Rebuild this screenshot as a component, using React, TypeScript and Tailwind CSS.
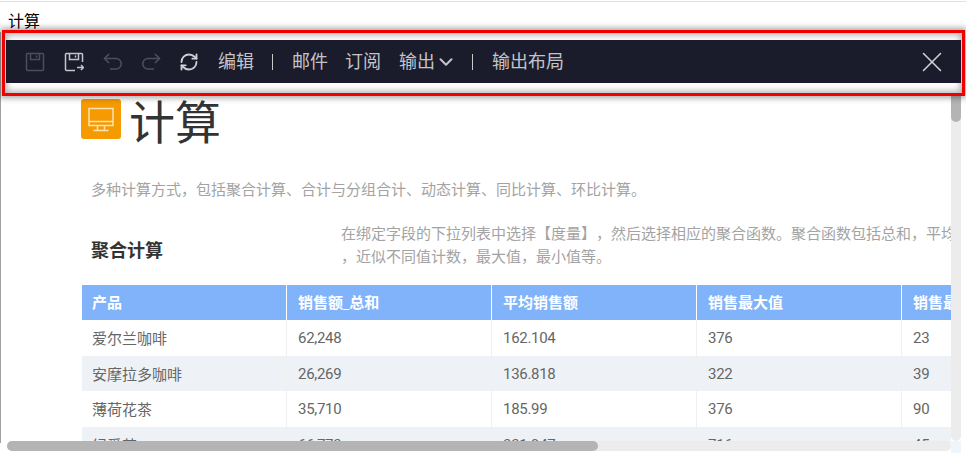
import { RefreshCw, ChevronDown, X } from 'lucide-react';

const columns = ['产品', '销售额_总和', '平均销售额', '销售最大值', '销售最小值'];

const rows = [
  ['爱尔兰咖啡', '62,248', '162.104', '376', '23'],
  ['安摩拉多咖啡', '26,269', '136.818', '322', '39'],
  ['薄荷花茶', '35,710', '185.99', '376', '90'],
  ['绿爱茶', '66,773', '331.947', '716', '45'],
];

function SaveIcon() {
  return (
    <svg width="20" height="20" viewBox="0 0 20 20" fill="none" stroke="currentColor" strokeWidth="1.5">
      <path d="M1.5 2.5a1 1 0 0 1 1-1h15a1 1 0 0 1 1 1v15a1 1 0 0 1-1 1h-15a1 1 0 0 1-1-1z" />
      <path d="M5.5 1.5v6h9v-6" />
      <path d="M11.5 3.5v2" />
    </svg>
  );
}

function SaveAsIcon() {
  return (
    <svg width="20" height="20" viewBox="0 0 20 20" fill="none" stroke="currentColor" strokeWidth="1.5">
      <path d="M18.5 10V2.5a1 1 0 0 0-1-1h-15a1 1 0 0 0-1 1v15a1 1 0 0 0 1 1H11" />
      <path d="M5.5 1.5v6h9v-6" />
      <path d="M11.5 3.5v2" />
      <path d="M13 15.5h6.5M17 13l2.5 2.5L17 18" />
    </svg>
  );
}

function UndoIcon() {
  return (
    <svg width="20" height="18" viewBox="0 0 20 18" fill="none" stroke="currentColor" strokeWidth="1.6">
      <path d="M6 1 1.5 5.5 6 10" />
      <path d="M1.5 5.5H13a5.25 5.25 0 0 1 0 10.5H7" />
    </svg>
  );
}

function RedoIcon() {
  return (
    <svg width="20" height="18" viewBox="0 0 20 18" fill="none" stroke="currentColor" strokeWidth="1.6">
      <path d="M14 1l4.500 4.500L14 10" />
      <path d="M18.500 5.500H7a5.250 5.250 0 0 0 0 10.500h6" />
    </svg>
  );
}

function MonitorIcon() {
  return (
    <svg width="30" height="30" viewBox="0 0 30 30" fill="none" stroke="#fde3b4" strokeWidth="1.5">
      <rect x="3" y="4.500" width="24" height="17" />
      <path d="M3 17.500h24M11.500 21.500v5M18.500 21.500v5M7.500 26.500h15" />
    </svg>
  );
}

function Separator() {
  return <div className="w-px h-[16px] bg-[#c8c8c8]" />;
}

function Toolbar() {
  return (
    <div className="absolute left-[2px] top-[28px] w-[963px] h-[66px] border-[3px] border-[#f00000] bg-white pt-[7px] pl-px pr-[1px] shadow-[0_0_6px_2px_rgba(0,0,0,0.35),inset_0_0_6px_2px_rgba(0,0,0,0.3)]">
      <div className="h-[43px] bg-[#1a1c2c] flex items-center pl-[19px] pr-[12px] text-[18px] text-[#c4c4c8]">
        <div className="text-[#4c4e5a]"><SaveIcon /></div>
        <div className="ml-[19px] text-[#c4c4c8]"><SaveAsIcon /></div>
        <div className="ml-[19px] text-[#4c4e5a]"><UndoIcon /></div>
        <div className="ml-[18px] text-[#4c4e5a]"><RedoIcon /></div>
        <RefreshCw className="ml-[18px] text-[#d0d0d4]" size={20} strokeWidth={2.2} />
        <span className="ml-[19px]">编辑</span>
        <div className="ml-[18px]"><Separator /></div>
        <span className="ml-[19px]">邮件</span>
        <span className="ml-[17px]">订阅</span>
        <span className="ml-[18px]">输出</span>
        <ChevronDown size={22} strokeWidth={2.2} />
        <div className="ml-[15px]"><Separator /></div>
        <span className="ml-[19px]">输出布局</span>
        <X className="ml-auto text-[#d0d0d4]" size={34} strokeWidth={1.1} />
      </div>
    </div>
  );
}

function DataTable() {
  return (
    <table className="mt-[17px] ml-px table-fixed border-separate border-spacing-0 w-[1025px] text-[15px]">
      <thead>
        <tr className="h-[35px] bg-[#80b3fa] text-white">
          {columns.map((col, j) => (
            <th key={col} className={j === 0 ? 'w-[205px] pl-[10px] text-left font-bold border-r border-white' : 'w-[205px] pl-[11px] text-left font-bold border-r border-white'}>{col}</th>
          ))}
        </tr>
      </thead>
      <tbody className="text-[#666666]">
        {rows.map((row, i) => (
          <tr key={row[0]} className={i % 2 === 0 ? 'h-[36px] bg-white' : 'h-[35px] bg-[#eef2f6]'}>
            {row.map((cell, j) => (
              <td key={j} className={j === 0 ? 'pl-[10px] pt-px border-r border-[#f0f0f0]' : "pl-[11px] pt-px font-['Roboto'] tracking-[-0.3px] border-r border-[#f0f0f0]"}>{cell}</td>
            ))}
          </tr>
        ))}
      </tbody>
    </table>
  );
}

export default function App() {
  return (
    <div
      className="relative h-[452px] w-[966px] overflow-hidden bg-white border-t border-[#e0e0e0] mt-px [text-spacing-trim:space-all]"
      style={{ fontFamily: '"Open Sans", "Noto Sans CJK SC", sans-serif' }}
    >
      <div className="pl-[8px] h-[30px] pt-[7px] text-[16px] leading-[24px] text-black">计算</div>

      <div className="h-[411px] w-[951px] overflow-hidden border-l border-[#a0a0a0] pl-[80px]">
        <div className="w-[1100px] pt-[67px]">
          <div className="flex items-center h-[40px]">
            <div className="w-[40px] h-[40px] rounded-[3px] bg-[#f59a00] flex items-center justify-center">
              <MonitorIcon />
            </div>
            <h1 className="ml-[8px] mt-[3px] text-[46px] leading-[48px] text-[#333333]">计算</h1>
          </div>
          <p className="mt-[39px] ml-[10px] text-[15px] leading-[22px] text-[#a3a3a3]">
            多种计算方式，包括聚合计算、合计与分组合计、动态计算、同比计算、环比计算。
          </p>
          <div className="mt-[22px] ml-[10px] flex items-start">
            <h2 className="w-[250px] mt-[14px] text-[18px] leading-[28px] font-bold text-[#333333]">聚合计算</h2>
            <div className="text-[15px] leading-[23px] text-[#a3a3a3] whitespace-nowrap">
              <div>在绑定字段的下拉列表中选择【度量】，然后选择相应的聚合函数。聚合函数包括总和，平均值</div>
              <div>，近似不同值计数，最大值，最小值等。</div>
            </div>
          </div>
          <DataTable />
        </div>
      </div>

      {/* scrollbars */}
      <div className="absolute left-[951px] top-[80px] w-[10px] h-[359px] rounded-b-[5px] bg-[#ececec]">
        <div className="w-full h-[40px] rounded-[5px] bg-[#b4b4b4]" />
      </div>
      <div className="absolute left-[7px] top-[439px] w-[944px] h-[10px] rounded-[5px] bg-[#ececec]">
        <div className="w-[591px] h-full rounded-[5px] bg-[#b4b4b4]" />
      </div>
      <div className="absolute left-[951px] top-[439px] w-[10px] h-[13px] bg-[#eef5fb]" />

      <Toolbar />
    </div>
  );
}
